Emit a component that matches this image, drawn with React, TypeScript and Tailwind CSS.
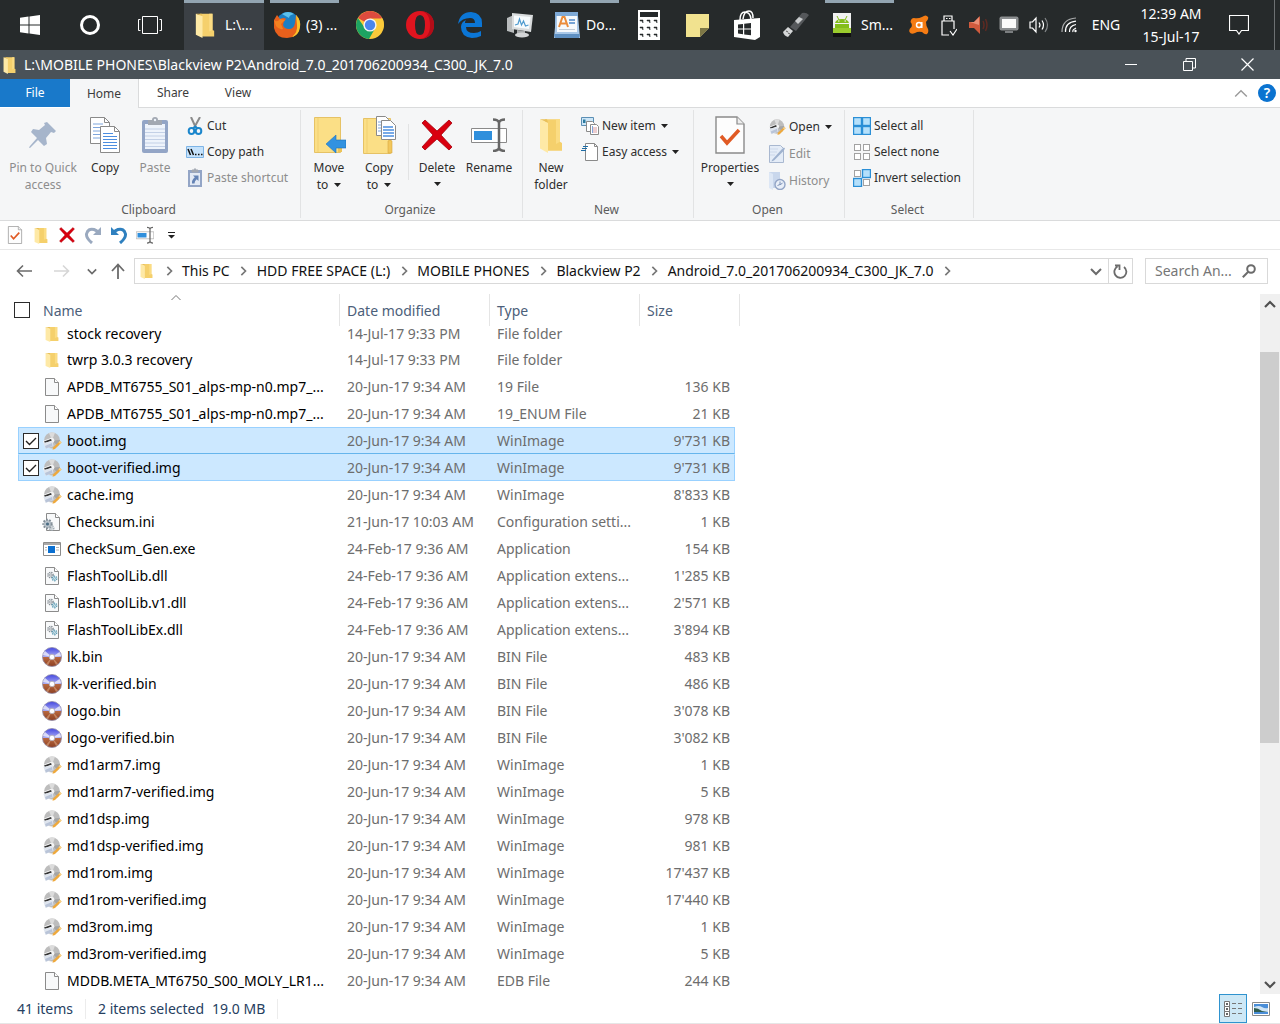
import type React from "react"
import { clsx } from "clsx"

type FileKind = "folder" | "blank" | "image" | "ini" | "exe" | "dll" | "bin"

interface FileRow {
  name: string
  kind: FileKind
  date: string
  type: string
  size?: string
  selected?: boolean
}

const JUN = "20-Jun-17 9:34 AM"
const FEB = "24-Feb-17 9:36 AM"

const files: FileRow[] = [
  { name: "stock recovery", kind: "folder", date: "14-Jul-17 9:33 PM", type: "File folder" },
  { name: "twrp 3.0.3 recovery", kind: "folder", date: "14-Jul-17 9:33 PM", type: "File folder" },
  { name: "APDB_MT6755_S01_alps-mp-n0.mp7_...", kind: "blank", date: JUN, type: "19 File", size: "136 KB" },
  { name: "APDB_MT6755_S01_alps-mp-n0.mp7_...", kind: "blank", date: JUN, type: "19_ENUM File", size: "21 KB" },
  { name: "boot.img", kind: "image", date: JUN, type: "WinImage", size: "9'731 KB", selected: true },
  { name: "boot-verified.img", kind: "image", date: JUN, type: "WinImage", size: "9'731 KB", selected: true },
  { name: "cache.img", kind: "image", date: JUN, type: "WinImage", size: "8'833 KB" },
  { name: "Checksum.ini", kind: "ini", date: "21-Jun-17 10:03 AM", type: "Configuration setti...", size: "1 KB" },
  { name: "CheckSum_Gen.exe", kind: "exe", date: FEB, type: "Application", size: "154 KB" },
  { name: "FlashToolLib.dll", kind: "dll", date: FEB, type: "Application extens...", size: "1'285 KB" },
  { name: "FlashToolLib.v1.dll", kind: "dll", date: FEB, type: "Application extens...", size: "2'571 KB" },
  { name: "FlashToolLibEx.dll", kind: "dll", date: FEB, type: "Application extens...", size: "3'894 KB" },
  { name: "lk.bin", kind: "bin", date: JUN, type: "BIN File", size: "483 KB" },
  { name: "lk-verified.bin", kind: "bin", date: JUN, type: "BIN File", size: "486 KB" },
  { name: "logo.bin", kind: "bin", date: JUN, type: "BIN File", size: "3'078 KB" },
  { name: "logo-verified.bin", kind: "bin", date: JUN, type: "BIN File", size: "3'082 KB" },
  { name: "md1arm7.img", kind: "image", date: JUN, type: "WinImage", size: "1 KB" },
  { name: "md1arm7-verified.img", kind: "image", date: JUN, type: "WinImage", size: "5 KB" },
  { name: "md1dsp.img", kind: "image", date: JUN, type: "WinImage", size: "978 KB" },
  { name: "md1dsp-verified.img", kind: "image", date: JUN, type: "WinImage", size: "981 KB" },
  { name: "md1rom.img", kind: "image", date: JUN, type: "WinImage", size: "17'437 KB" },
  { name: "md1rom-verified.img", kind: "image", date: JUN, type: "WinImage", size: "17'440 KB" },
  { name: "md3rom.img", kind: "image", date: JUN, type: "WinImage", size: "1 KB" },
  { name: "md3rom-verified.img", kind: "image", date: JUN, type: "WinImage", size: "5 KB" },
  { name: "MDDB.META_MT6750_S00_MOLY_LR1...", kind: "blank", date: JUN, type: "EDB File", size: "244 KB" },
]

const crumbs = ["This PC", "HDD FREE SPACE (L:)", "MOBILE PHONES", "Blackview P2", "Android_7.0_201706200934_C300_JK_7.0"]

/* ---------- shared icons ---------- */

const FolderIcon = ({ className }: { className: string }) => (
  <svg viewBox="0 0 24 32" preserveAspectRatio="none" className={className}>
    <path d="M6 2h15v20l2 1v7H6z" fill="#f5d06c" />
    <path d="M17 2h4v20l-4 2z" fill="#fbdc83" />
    <path d="M1 2l8 3v27l-8-4z" fill="#fee9a6" />
    <path d="M1 2h7l1 3z" fill="#e9c05a" />
  </svg>
)

const PageIcon = ({ className, children }: { className: string; children?: React.ReactNode }) => (
  <svg viewBox="0 0 18 20" className={className}>
    <path d="M2.5 1.5h9l4 4v13h-13z" fill="#f8f9fa" stroke="#8b8b8b" />
    <path d="M11.5 1.5v4h4" fill="#fff" stroke="#8b8b8b" />
    {children}
  </svg>
)

const DiscImageIcon = () => (
  <svg viewBox="0 0 20 20" className="size-5">
    <circle cx="10" cy="9.500" r="8" fill="#bdbdbd" />
    <path d="M10 9.500L7 2a8 8 0 0 1 6-.2z" fill="#dcdcdc" />
    <path d="M10 9.500L18 9a8 8 0 0 1-2 6z" fill="#a5a5a5" />
    <circle cx="10" cy="9.500" r="2.400" fill="#f4f4f4" />
    <path d="M1 10l8-3 2 3-9 3z" fill="#fafafa" />
    <path d="M2 10.500l7-2.600.8 1.600L3 12z" fill="#333" />
    <path d="M1.500 12l9-2 1 5-8 3z" fill="#dfe5ee" />
    <path d="M3 15l7-3 .6 3L4 17.500z" fill="#b9c4d8" />
    <path d="M11 16.500l7-6.500 1.500 1.500-6.500 6.500-2.500.8z" fill="#efa93c" />
    <path d="M16.500 11.300L18 9.800l1.700 1.600-1.500 1.500z" fill="#f6cf88" />
  </svg>
)

const Gear = ({ cx, cy, r, color }: { cx: number; cy: number; r: number; color: string }) => (
  <g fill="none" stroke={color}>
    <circle cx={cx} cy={cy} r={r} strokeWidth="1.500" strokeDasharray="1.300 0.800" />
    <circle cx={cx} cy={cy} r={r / 2.5} strokeWidth="0.800" />
  </g>
)

const FileIcon = ({ kind }: { kind: FileKind }) => {
  switch (kind) {
    case "folder":
      return <FolderIcon className="h-4 w-3.5" />
    case "blank":
      return <PageIcon className="h-5 w-[18px]" />
    case "image":
      return <DiscImageIcon />
    case "ini":
      return (
        <svg viewBox="0 0 20 20" className="size-5">
          <path d="M4.500 1.500h9l4 4v13h-13z" fill="#f8f9fa" stroke="#8b8b8b" />
          <path d="M13.500 1.500v4h4" fill="#fff" stroke="#8b8b8b" />
          <circle cx="5.500" cy="12" r="4" fill="#b9c3cb" />
          <circle cx="5.500" cy="12" r="4.200" fill="none" stroke="#7f8b94" strokeWidth="2" strokeDasharray="1.600 1.400" />
          <circle cx="5.500" cy="12" r="1.600" fill="#4e6f86" />
          <Gear cx={9.5} cy={16} r={2.3} color="#a3adb5" />
        </svg>
      )
    case "exe":
      return (
        <svg viewBox="0 0 20 20" className="size-5">
          <path d="M1.500 3.500h17v13h-17z" fill="#fff" stroke="#8b8b8b" />
          <path d="M2 4h16v2H2z" fill="#a9a9a9" />
          <path d="M6 7h7v7H6z" fill="#0a6fd1" />
          <path d="M3 8.500h2M3 11h2M14 8.500h3M14 11h3" stroke="#b5b5b5" />
        </svg>
      )
    case "dll":
      return (
        <PageIcon className="h-5 w-[18px]">
          <Gear cx={7.5} cy={9} r={2.6} color="#878f96" />
          <Gear cx={11.5} cy={12.5} r={2.2} color="#5d9db5" />
        </PageIcon>
      )
    case "bin":
      return (
        <svg viewBox="0 0 20 20" className="size-5">
          <defs>
            <linearGradient id="cd" x1="0" y1="0" x2="0" y2="1">
              <stop offset="0" stopColor="#4347e0" />
              <stop offset="0.480" stopColor="#a9abf2" />
              <stop offset="0.520" stopColor="#b8683f" />
              <stop offset="1" stopColor="#8c3f22" />
            </linearGradient>
          </defs>
          <circle cx="10" cy="10" r="9.500" fill="url(#cd)" stroke="#8f8ba8" strokeWidth="0.800" />
          <path d="M10 10L1 8a9 9 0 0 1 2-4zM10 10l7.500-5a9 9 0 0 1 1.500 4z" fill="#eceefa" opacity="0.800" />
          <path d="M10 10L6 18.500a9 9 0 0 1-2-1.500zM10 10l4 8a9 9 0 0 0 2-1.500z" fill="#e6b592" opacity="0.500" />
          <circle cx="10" cy="10" r="2.800" fill="#fff" stroke="#a9a3b0" strokeWidth="0.800" />
        </svg>
      )
  }
}

const Caret = () => (
  <svg viewBox="0 0 7 4" className="h-1 w-[7px]">
    <path d="M0 0h7L3.500 4z" fill="#222" />
  </svg>
)

const Chevron = ({ className, d, width = 2 }: { className: string; d: string; width?: number }) => (
  <svg viewBox="0 0 12 12" className={className} fill="none" stroke="currentColor" strokeWidth={width}>
    <path d={d} />
  </svg>
)

const RenameIcon = ({ className }: { className: string }) => (
  <svg viewBox="0 0 36 34" className={className}>
    <path d="M.5 10.500h35v14H.5z" fill="#fff" stroke="#8a8a8a" />
    <path d="M3 13h18v9H3z" fill="#2f8fdc" />
    <path d="M22 1.500q5 0 6 3 1-3 6-3M28 4v26M22 33q5 0 6-3 1 3 6 3" fill="none" stroke="#666" strokeWidth="2.500" />
  </svg>
)

const CrossIcon = ({ className }: { className: string }) => (
  <svg viewBox="0 0 32 32" className={className}>
    <path d="M1 4l3-3 12 11L28 1l3 3-11 12 11 12-3 3-12-11L4 31l-3-3 11-12z" fill="#d9000f" stroke="#a5000b" strokeWidth="0.800" />
  </svg>
)

const PropertiesIcon = ({ className }: { className: string }) => (
  <svg viewBox="0 0 30 38" className={className}>
    <path d="M1 1h21l7 7v29H1z" fill="#fdfdfd" stroke="#8a8a8a" strokeWidth="1.400" />
    <path d="M22 1v7h7" fill="#eee" stroke="#8a8a8a" strokeWidth="1.200" />
    <path d="M6 20l6 7 12-13" fill="none" stroke="#e05a24" strokeWidth="3.500" />
  </svg>
)

/* ---------- ribbon icons ---------- */

const PinIcon = () => (
  <svg viewBox="0 0 28 28" className="size-7">
    <path d="M18 1l9 9-2 2-3-1-5 6 1 6-3 2-6-6-8 8-1-.5L1 25l7-8-6-6 2-3 6 1 6-5-1-2z" fill="#a6b5cb" />
  </svg>
)

const CopyIcon = () => (
  <svg viewBox="0 0 32 38" className="h-[38px] w-8">
    <path d="M1.500 1.500h14l5 5v21h-19z" fill="#fff" stroke="#8a8a8a" />
    <path d="M15.500 1.500v5h5" fill="none" stroke="#8a8a8a" />
    <path d="M4 8h10M4 11.500h8M4 15h8M4 18.500h8M4 22h8" stroke="#7fa6dd" />
    <path d="M11.500 10.500h14l5 5v21h-19z" fill="#fff" stroke="#8a8a8a" />
    <path d="M25.500 10.500v5h5" fill="none" stroke="#8a8a8a" />
    <path d="M14 17.500h10M14 20.500h14M14 23.500h14M14 26.500h14M14 29.500h14M14 32.500h14" stroke="#4c8ee0" />
  </svg>
)

const PasteIcon = () => (
  <svg viewBox="0 0 28 38" className="h-[38px] w-7">
    <rect x="1" y="4" width="26" height="33" rx="2" fill="#93a5c6" />
    <path d="M4 8h20v25H4z" fill="#eef3fb" />
    <path d="M4 13h20M4 16.500h20M4 20h20M4 23.500h20M4 27h20M4 30.500h20" stroke="#c3d0e6" />
    <path d="M7 4h4q0-3 3-3t3 3h4v5H7z" fill="#a2a8b2" />
    <circle cx="14" cy="4" r="1.200" fill="#eef3fb" />
  </svg>
)

const MoveToIcon = () => (
  <svg viewBox="0 0 34 38" className="h-[38px] w-[34px]">
    <path d="M2.500 1.500h26v35h-26z" fill="#fbdf86" stroke="#e6c265" />
    <path d="M6 2v34" stroke="#f1cf70" />
    <path d="M26 24h4v12h-4z" fill="#edc458" />
    <path d="M14 28l10-9v5h10v8H24v5z" fill="#3292e0" stroke="#1d73bd" strokeWidth="0.600" />
  </svg>
)

const CopyToIcon = () => (
  <svg viewBox="0 0 34 40" className="h-10 w-[34px]">
    <path d="M1.500 3.500h27v35h-27z" fill="#fbdf86" stroke="#e6c265" />
    <path d="M5 4v34" stroke="#f1cf70" />
    <path d="M26 26q2-2 4 0v12h-4z" fill="#f2c75c" stroke="#d6a93f" strokeWidth="0.600" />
    <path d="M14.500 1.500h9l3 3v16h-12z" fill="#fff" stroke="#8a8a8a" />
    <path d="M16 7h8M16 10h4M16 13h4M16 16h4" stroke="#7fa6dd" />
    <path d="M19.500 5.500h9l5 5v14h-14z" fill="#fff" stroke="#8a8a8a" />
    <path d="M21 12h10M21 15h11M21 18h11M21 21h11" stroke="#4c8ee0" strokeWidth="1.400" />
  </svg>
)

const CutIcon = () => (
  <svg viewBox="0 0 18 18" className="size-[18px]" fill="none">
    <path d="M5 0l5 11M14 0L8 11" stroke="#8b8b8b" strokeWidth="2" />
    <ellipse cx="5.500" cy="14" rx="2.800" ry="3" stroke="#1b86cc" strokeWidth="2" />
    <ellipse cx="12.500" cy="14" rx="2.800" ry="3" stroke="#1b86cc" strokeWidth="2" />
    <path d="M7 11.500l2.300-2 2.200 2" stroke="#1b86cc" strokeWidth="2" />
  </svg>
)

const CopyPathIcon = () => (
  <svg viewBox="0 0 18 12" className="h-3 w-[18px]">
    <path d="M.5.500h17v11H.5z" fill="#c5e2fb" stroke="#7db4e6" />
    <path d="M2 3l2.500 6M5 3l2.500 6" stroke="#111" strokeWidth="1.500" />
    <path d="M9 8.500h1.500M12 8.500h1.500M15 8.500h1.500" stroke="#111" strokeWidth="1.500" />
  </svg>
)

const PasteShortcutIcon = () => (
  <svg viewBox="0 0 18 20" className="h-5 w-[18px]">
    <rect x="2" y="2" width="14" height="17" fill="#93a5c6" />
    <path d="M4 5h10v12H4z" fill="#e3eaf5" />
    <path d="M6 2h2q1-3 2 0h2v2H6z" fill="#a2a8b2" stroke="#a2a8b2" />
    <path d="M7 7.500h5.500V13l-1.800-1.800Q8.500 13 8.500 15.500H6Q5.500 12 8.800 9.300z" fill="#6483b5" />
  </svg>
)

const NewItemIcon = () => (
  <svg viewBox="0 0 18 18" className="size-[18px]">
    <path d="M.5.500h12v8H.5z" fill="#cde6f7" stroke="#5b8fb5" />
    <path d="M2 6V2.500h2.500V6z" fill="#2b7a9f" />
    <path d="M5.500 4.500h6l2 2v8h-8z" fill="#fff" stroke="#8a8a8a" />
    <path d="M9.500 7.500h6l2 2v8h-8z" fill="#fff" stroke="#8a8a8a" />
    <path d="M11 11h5M11 13h5M11 15h5" stroke="#d99aa0" />
    <path d="M11.500 9v7" stroke="#7fa6dd" />
  </svg>
)

const EasyAccessIcon = () => (
  <svg viewBox="0 0 18 18" className="size-[18px]">
    <path d="M4.500.500h9l3 3v14h-12z" fill="#fff" stroke="#8a8a8a" />
    <path d="M13.500.500v3h3" fill="none" stroke="#8a8a8a" />
    <path d="M2 3.500h5M1 5.500h5M0 7.500h5" stroke="#1f6da5" strokeWidth="1.200" />
  </svg>
)

const EditIcon = () => (
  <svg viewBox="0 0 18 18" className="size-[18px]">
    <path d="M1.500.500h11l3 3v14h-14z" fill="#e4ecf7" stroke="#a9b8d0" />
    <path d="M4 15L14 4l2-1.500 1 1L15.500 6 6 15.500 3.500 16.500z" fill="#9fb2cf" />
    <path d="M2 4h8M2 7h7M2 10h5" stroke="#ccd8ea" />
  </svg>
)

const HistoryIcon = () => (
  <svg viewBox="0 0 18 18" className="size-[18px]">
    <path d="M1 0h11v16H1z" fill="#c9d7ec" />
    <path d="M1 0l4 2v16l-4-2z" fill="#dde7f5" />
    <circle cx="12" cy="12.500" r="5" fill="#e9eff8" stroke="#93a5c6" strokeWidth="1.400" />
    <path d="M12 9.500v3.200l2.500-1.500M9.500 13.500l2.500-1" fill="none" stroke="#7d92b8" />
  </svg>
)

const SelectIcon = ({ cells }: { cells: boolean[] }) => (
  <svg viewBox="0 0 18 18" className="size-[18px]">
    {cells.map((on, i) => {
      const right = i % 2 === 1
      const low = i > 1
      return on ? (
        <rect key={i} x={right ? 9.5 : 0.5} y={low ? 9.5 : 0.5} width="8" height="8" fill="#b5e0fb" stroke="#2b8fd6" strokeWidth="1.400" />
      ) : (
        <rect key={i} x={right ? 10.5 : 1.5} y={low ? 10.5 : 1.5} width="6" height="6" fill="#fff" stroke="#a2a2a2" />
      )
    })}
  </svg>
)

const TurnIcon = ({ color, flip }: { color: string; flip?: boolean }) => (
  <svg viewBox="0 0 18 18" className={clsx("size-[18px]", flip && "-scale-x-100")}>
    <path d="M8 17Q2 12 2.500 8 4 2 10 3.500q3 1 4 3" fill="none" stroke={color} strokeWidth="3" />
    <path d="M17 1v8H9z" fill={color} />
  </svg>
)

/* ---------- taskbar ---------- */

const TaskIcon = ({ label, narrow, children }: { label: string; narrow?: boolean; children: React.ReactNode }) => (
  <button aria-label={label} className={clsx("flex h-full shrink-0 items-center justify-center", narrow ? "w-[49px]" : "w-[50px]")}>
    {children}
  </button>
)

const TaskWindow = ({ text, active, children }: { text: string; active?: boolean; children: React.ReactNode }) => (
  <button
    className={clsx(
      "flex h-full shrink-0 items-center border-t-[3px] border-[#93a5b2] pb-[3px] text-white",
      active ? "w-20 gap-2.5 bg-[#3b4045] pl-[11px]" : "w-[69px] gap-[5px] pl-[3px]",
    )}
  >
    {children}
    <span className="whitespace-nowrap">{text}</span>
  </button>
)

const TrayIcon = ({ label, children }: { label: string; children: React.ReactNode }) => (
  <button aria-label={label} className="flex h-full w-[30px] items-center justify-center">
    {children}
  </button>
)

const Taskbar = () => (
  <div className="flex h-[50px] items-center bg-[#262a2b] text-sm text-white">
    <button aria-label="Start" className="flex h-full w-[60px] items-center justify-center">
      <svg viewBox="0 0 20 20" className="size-5" fill="#fff">
        <path d="M0 2.800L8.500 1.600v8H0zM9.500 1.500L20 0v9.600H9.500zM0 10.500h8.500v8L0 17.300zM9.500 10.500H20V20L9.500 18.600z" />
      </svg>
    </button>
    <button aria-label="Cortana" className="flex h-full w-[60px] items-center justify-center">
      <span className="size-5 rounded-full border-[3px] border-white" />
    </button>
    <button aria-label="Task view" className="mr-1 flex h-full w-[60px] items-center justify-center">
      <svg viewBox="0 0 24 18" className="h-[18px] w-6" fill="none" stroke="#fff">
        <path d="M4.500.500h15v17h-15zM2.500 3.500h-2v11h2M21.500 3.500h2v11h-2" />
      </svg>
    </button>
    <TaskWindow text="L:\..." active>
      <FolderIcon className="h-[26px] w-5" />
    </TaskWindow>
    <div className="mx-1.5 flex h-full">
      <TaskWindow text="(3) ...">
        <svg viewBox="0 0 28 28" className="size-7 shrink-0">
          <circle cx="15" cy="12.500" r="11.500" fill="#1c7fc4" />
          <path d="M9 3q6-4 12 0-5 1-5 4z" fill="#5cc0ec" />
          <path d="M1 9L4 4l3 4q4-2 6 0-3 3-3 6 1 4 6 4 5 0 6-6l1-8q5 5 4 12-2 11-13 11T1 17z" fill="#e8601c" />
          <path d="M23 4q5 5 4 12-1 8-8 10 6-5 5-12z" fill="#fbc42c" />
          <path d="M1 9q3 3 6-1l5 1-4 4 2 5q-4 1-7-3z" fill="#f58220" />
        </svg>
      </TaskWindow>
    </div>
    <TaskIcon label="Chrome">
      <svg viewBox="0 0 28 28" className="size-7">
        <circle cx="14" cy="14" r="14" fill="#fbca3a" />
        <path d="M14 14L2 7a14 14 0 0 1 24.200 0z" fill="#dd4b3e" />
        <path d="M1.900 7A14 14 0 0 0 13 28l6-10.500-9 1z" fill="#1da462" />
        <path d="M14 7.500h12.500q2 5 1 9L19 14z" fill="#fbca3a" />
        <circle cx="14" cy="14" r="6.600" fill="#f4f4f4" />
        <circle cx="14" cy="14" r="5.200" fill="#4a86ee" />
      </svg>
    </TaskIcon>
    <TaskIcon label="Opera">
      <svg viewBox="0 0 28 28" className="size-7">
        <path d="M14 0a14 14 0 1 0 0 28 14 14 0 1 0 0-28zm0 4q5 0 5 10t-5 10-5-10 5-10z" fill="#e0141f" fillRule="evenodd" />
        <path d="M14 0q10 1 10 14T14 28q14-1 14-14T14 0z" fill="#b30d18" />
      </svg>
    </TaskIcon>
    <TaskIcon label="Edge">
      <svg viewBox="0 0 26 26" className="size-[26px]">
        <path d="M1 12Q3 0 14 0q11 1 11 11v4H9q0 6 8 6 4 0 7-2v5q-4 2-9 2Q4 25 4 15q0-5 5-7-1 1-1 3h10q0-5-5-5Q5 6 1 12z" fill="#0b76d6" />
      </svg>
    </TaskIcon>
    <TaskIcon label="Resource monitor">
      <svg viewBox="0 0 28 26" className="h-[26px] w-7">
        <path d="M1 6l7-3v18l-7-2z" fill="#b9bcbd" />
        <path d="M6 1l21 2-2 17-19-3z" fill="#d9dcdd" />
        <path d="M8 3.500l16.500 1.500-1.500 12-15-2z" fill="#f7fbfd" />
        <path d="M9 13l3-1 1.500-5 2 6 2-4 2 5 3-1" fill="none" stroke="#4f9bcf" strokeWidth="1.200" />
        <path d="M11 18l8 1v3H11z" fill="#a9acad" />
        <ellipse cx="16" cy="23" rx="7" ry="2.500" fill="#d3d5d6" />
      </svg>
    </TaskIcon>
    <div className="mx-[5px] flex h-full">
      <TaskWindow text="Do...">
        <svg viewBox="0 0 28 28" className="size-7 shrink-0">
          <path d="M2 1h23v26H2z" fill="#7ea9d6" />
          <path d="M3 5h22l2 22H1z" fill="#a9c8e8" />
          <path d="M4 5h20v16H4z" fill="#f6f9fc" />
          <path d="M6 16L9.500 6h2l3.500 10M8 12.500h5" fill="none" stroke="#ea8b3a" strokeWidth="2" />
          <path d="M16 9h6M16 12h6" stroke="#4c86c8" strokeWidth="1.500" />
          <path d="M6 18.500h16" stroke="#c3ccd6" />
          <path d="M1 23h26l-1 4H2z" fill="#5f90c2" />
        </svg>
      </TaskWindow>
    </div>
    <TaskIcon label="Calculator" narrow>
      <svg viewBox="0 0 22 30" className="h-[30px] w-[22px]">
        <path d="M0 0h22v30H0z" fill="#fff" />
        <path d="M2 2h18v5H2z" fill="#262a2b" />
        {[10, 17, 24].map((y) =>
          [2, 9, 16].map((x) => <path key={`${x}-${y}`} d={`M${x} ${y}h3v3l-1-2h-2z`} fill="#262a2b" stroke="#262a2b" strokeWidth="0.500" />),
        )}
      </svg>
    </TaskIcon>
    <TaskIcon label="Sticky notes" narrow>
      <svg viewBox="0 0 23 23" className="size-[23px]">
        <path d="M0 0h23v14l-9 9H0z" fill="#f1e28f" />
        <path d="M14 23v-9h9z" fill="#7d7746" />
      </svg>
    </TaskIcon>
    <TaskIcon label="Store" narrow>
      <svg viewBox="0 0 26 30" className="h-[30px] w-[26px]">
        <path d="M0 10l26-2v19l-5 3-21-3z" fill="#fff" />
        <path d="M6 10q0-8 5-8t6 7M9 9q1-8 6-8 4 0 4 7" fill="none" stroke="#fff" strokeWidth="1.500" />
        <path d="M4 14.500l5-.6v4.600H4zM10.200 13.800l6.800-.8v5.500h-6.800zM4 19.600h5v4.600l-5-.6zM10.200 19.600H17v5.600l-6.800-.8z" fill="#262a2b" />
      </svg>
    </TaskIcon>
    <TaskIcon label="USB drive" narrow>
      <svg viewBox="0 0 28 26" className="h-[26px] w-7">
        <path d="M8 15L20 1q4-1 7 2L14 19z" fill="#55585b" />
        <path d="M13 9l4-4 4 2-5 5z" fill="#c9cccd" />
        <path d="M1 20l5-5 5 4-5 6q-4-1-5-5z" fill="#d5d7d8" />
        <path d="M4 19l2 1M6 21l2 1" stroke="#5b5b5b" />
      </svg>
    </TaskIcon>
    <div className="ml-[5px] flex h-full">
      <TaskWindow text="Sm...">
        <svg viewBox="0 0 28 28" className="size-7 shrink-0">
          <path d="M5 2h18v20H5z" fill="#f1f1f1" />
          <path d="M5 22h18v4H5z" fill="#111" />
          <path d="M7 12q1-4 7-4t7 4zM7 13h14v7H7z" fill="#84bd1b" />
          <path d="M9 5l2 4M19 5l-2 4" stroke="#84bd1b" />
          <path d="M5 17h18v5H5z" fill="#9acb2d" />
          <path d="M10 10h1.500M16.500 10H18" stroke="#fff" />
        </svg>
      </TaskWindow>
    </div>
    <div className="ml-auto flex h-full items-center">
      <TrayIcon label="Avast">
        <svg viewBox="0 0 20 20" className="size-5">
          <path d="M5 3q4 1 8-1 4-3 6 0 1 2-2 5 0 4 2 7 1 3-1 5-2 1-5-2-4-1-7 1-4 2-5.500-1-1-3 2-5 1-3-1-5Q2 3 5 3z" fill="#f57c14" />
          <circle cx="10" cy="10" r="2.500" fill="none" stroke="#fff" strokeWidth="1.500" />
          <path d="M12.800 7v6" stroke="#fff" strokeWidth="1.500" />
        </svg>
      </TrayIcon>
      <TrayIcon label="Safely remove hardware">
        <svg viewBox="0 0 16 21" className="h-[21px] w-4" fill="none" stroke="#fff" strokeWidth="1.200">
          <path d="M3 6V1h8v5M8 20H1V6h12v8M9 16l3 4 4-6M5 3.500h1.500M8 3.500h1.500" />
        </svg>
      </TrayIcon>
      <TrayIcon label="Audio manager">
        <svg viewBox="0 0 20 20" className="size-5">
          <path d="M0 7h5l6-6v18l-6-6H0z" fill="#cf5a3d" />
          <path d="M1 7h4l5-5v8z" fill="#e98f76" />
          <path d="M14 6q2 4 0 8M16.500 4q3 6 0 12" fill="none" stroke="#5e2a22" strokeWidth="1.500" />
        </svg>
      </TrayIcon>
      <TrayIcon label="Display">
        <svg viewBox="0 0 20 18" className="h-[18px] w-5">
          <rect x="0.500" y="0.500" width="19" height="14" rx="2" fill="#8b8e90" />
          <path d="M3 3h14v9H3z" fill="#fbfbfb" />
          <path d="M6 15h8v2H6z" fill="#7b7e80" />
        </svg>
      </TrayIcon>
      <TrayIcon label="Volume">
        <svg viewBox="0 0 20 18" className="h-[18px] w-5" fill="none" stroke="#fff" strokeWidth="1.200">
          <path d="M1 6h2.500L7 2v14l-3.500-4H1zM10 6.500q2 2.500 0 5M13 4.500q3 4.500 0 9" />
          <path d="M16 2q5 7 0 14" stroke="#85888a" />
        </svg>
      </TrayIcon>
      <TrayIcon label="Network">
        <svg viewBox="0 0 16 16" className="size-4" fill="none" stroke="#fff" strokeWidth="1.200">
          <path d="M12 15q-1-2 3-4M8.500 15Q8 9 15 7.500M4.500 15Q4 5.500 15 4.200" />
          <path d="M1 15Q1 2 15 1" stroke="#a9abac" />
          <circle cx="14.500" cy="14" r="1.200" fill="#fff" stroke="none" />
        </svg>
      </TrayIcon>
      <button className="w-11 text-center">ENG</button>
      <button className="w-[86px] text-center leading-[23px]">
        12:39 AM
        <br />
        15-Jul-17
      </button>
      <button aria-label="Notifications" className="flex h-full w-[50px] items-center justify-center">
        <svg viewBox="0 0 20 20" className="size-5" fill="none" stroke="#fff" strokeWidth="1.200">
          <path d="M.5.500h19v15h-7L10 19l-2.500-3.500h-7z" />
        </svg>
      </button>
      <div className="ml-2.5 mr-[5px] h-full w-px bg-[#6d7173]" />
    </div>
  </div>
)

/* ---------- window ---------- */

const TitleBar = () => (
  <div className="flex h-[29px] items-center bg-[#4a5258] text-white">
    <FolderIcon className="ml-[3px] mr-2 h-[18px] w-[13px]" />
    <h1 className="text-sm">L:\MOBILE PHONES\Blackview P2\Android_7.0_201706200934_C300_JK_7.0</h1>
    <div className="ml-auto mr-1 flex h-full">
      <button aria-label="Minimize" className="flex w-[58px] items-center justify-center">
        <span className="h-px w-3 bg-white" />
      </button>
      <button aria-label="Restore" className="flex w-[58px] items-center justify-center">
        <svg viewBox="0 0 13 13" className="size-[13px]" fill="none" stroke="#fff">
          <path d="M.5 3.500h9v9h-9zM3 3V.500h9.500V10H10" />
        </svg>
      </button>
      <button aria-label="Close" className="flex w-[58px] items-center justify-center">
        <svg viewBox="0 0 13 13" className="size-[13px]" stroke="#fff" strokeWidth="1.200">
          <path d="M.5.500l12 12M12.500.500l-12 12" />
        </svg>
      </button>
    </div>
  </div>
)

const TabBar = () => (
  <div className="flex h-[29px] items-stretch bg-white text-xs text-[#3c3c3c]">
    <button className="mb-px w-[70px] bg-[#1979ca] text-white">File</button>
    <button className="w-[69px] border-r border-[#dadbdc] bg-[#f5f6f7]">Home</button>
    <div className="flex flex-1 items-center border-b border-[#dadbdc]">
      <button className="w-[68px]">Share</button>
      <button className="w-[62px]">View</button>
      <button aria-label="Minimize the ribbon" className="ml-auto mr-2.5 text-[#9a9a9a]">
        <Chevron className="size-3.5" d="M1 9l5-5 5 5" width={1.2} />
      </button>
      <button aria-label="Help" className="mr-1 flex size-[18px] items-center justify-center rounded-full bg-[#0b73d0] text-sm font-semibold leading-none text-white">
        ?
      </button>
    </div>
  </div>
)

interface BigButtonProps {
  icon: React.ReactNode
  lines: string[]
  width: string
  arrow?: boolean
  disabled?: boolean
}

const BigButton = ({ icon, lines, width, arrow, disabled }: BigButtonProps) => (
  <button disabled={disabled} className={clsx("flex shrink-0 flex-col items-center leading-[17px]", width, disabled && "text-[#8d8d8d]")}>
    <span className="my-1 flex h-[41px] items-center justify-center">{icon}</span>
    {lines.map((line, i) => (
      <span key={line} className="flex items-center gap-1.5 whitespace-nowrap">
        {line}
        {arrow && i === 1 && <Caret />}
      </span>
    ))}
    {arrow && lines.length === 1 && (
      <span className="flex h-[15px] items-center">
        <Caret />
      </span>
    )}
  </button>
)

interface SmallButtonProps {
  icon: React.ReactNode
  text: string
  arrow?: boolean
  disabled?: boolean
}

const SmallButton = ({ icon, text, arrow, disabled }: SmallButtonProps) => (
  <button disabled={disabled} className={clsx("flex h-[26px] items-center gap-[3px] whitespace-nowrap", disabled && "text-[#8d8d8d]")}>
    <span className="flex w-[18px] justify-center">{icon}</span>
    {text}
    {arrow && (
      <span className="ml-0.5">
        <Caret />
      </span>
    )}
  </button>
)

const RibbonGroup = ({ label, width, children }: { label: string; width: string; children: React.ReactNode }) => (
  <section aria-label={label} className={clsx("my-0.5 flex shrink-0 flex-col border-r border-[#e2e3e4]", width)}>
    <div className="flex flex-1">{children}</div>
    <div className="pr-[3px] text-center leading-4 text-[#5c5c5c]">{label}</div>
  </section>
)

const Ribbon = () => (
  <div className="flex h-[113px] border-b border-[#dadbdc] bg-[#f5f6f7] text-xs text-[#2e2e2e]">
    <RibbonGroup label="Clipboard" width="w-[301px]">
      <BigButton icon={<PinIcon />} lines={["Pin to Quick", "access"]} width="ml-2 w-[70px]" disabled />
      <BigButton icon={<CopyIcon />} lines={["Copy"]} width="w-[54px]" />
      <BigButton icon={<PasteIcon />} lines={["Paste"]} width="w-[46px]" disabled />
      <div className="ml-2 flex flex-col pt-[3px]">
        <SmallButton icon={<CutIcon />} text="Cut" />
        <SmallButton icon={<CopyPathIcon />} text="Copy path" />
        <SmallButton icon={<PasteShortcutIcon />} text="Paste shortcut" disabled />
      </div>
    </RibbonGroup>
    <RibbonGroup label="Organize" width="w-[222px]">
      <BigButton icon={<MoveToIcon />} lines={["Move", "to"]} width="ml-[3px] w-[50px]" arrow />
      <BigButton icon={<CopyToIcon />} lines={["Copy", "to"]} width="w-[50px]" arrow />
      <div className="ml-1 mt-3.5 h-14 w-px bg-[#e2e3e4]" />
      <BigButton icon={<CrossIcon className="size-8" />} lines={["Delete"]} width="ml-0.5 w-[52px]" arrow />
      <BigButton icon={<RenameIcon className="h-[34px] w-9" />} lines={["Rename"]} width="w-[52px]" />
    </RibbonGroup>
    <RibbonGroup label="New" width="w-[171px]">
      <BigButton icon={<FolderIcon className="h-9 w-6" />} lines={["New", "folder"]} width="ml-[3px] w-[50px]" />
      <div className="ml-[5px] flex flex-col pt-[3px]">
        <SmallButton icon={<NewItemIcon />} text="New item" arrow />
        <SmallButton icon={<EasyAccessIcon />} text="Easy access" arrow />
      </div>
    </RibbonGroup>
    <RibbonGroup label="Open" width="w-[151px]">
      <BigButton icon={<PropertiesIcon className="h-[38px] w-[30px]" />} lines={["Properties"]} width="ml-[3px] w-[66px]" arrow />
      <div className="ml-[5px] flex flex-col gap-px pt-1">
        <SmallButton icon={<DiscImageIcon />} text="Open" arrow />
        <SmallButton icon={<EditIcon />} text="Edit" disabled />
        <SmallButton icon={<HistoryIcon />} text="History" disabled />
      </div>
    </RibbonGroup>
    <RibbonGroup label="Select" width="w-[129px]">
      <div className="ml-2 flex flex-col pt-[3px]">
        <SmallButton icon={<SelectIcon cells={[true, true, true, true]} />} text="Select all" />
        <SmallButton icon={<SelectIcon cells={[false, false, false, false]} />} text="Select none" />
        <SmallButton icon={<SelectIcon cells={[false, true, true, false]} />} text="Invert selection" />
      </div>
    </RibbonGroup>
  </div>
)

const QuickAccess = () => (
  <div className="flex h-[29px] items-center border-b border-[#e8e8e8] px-1.5">
    <button aria-label="Properties" className="flex w-[18px] justify-center">
      <PropertiesIcon className="h-[18px] w-4" />
    </button>
    <button aria-label="New folder" className="ml-2 flex w-[18px] justify-center">
      <FolderIcon className="h-[17px] w-3.5" />
    </button>
    <button aria-label="Delete" className="ml-2 flex w-[18px] justify-center">
      <CrossIcon className="size-4" />
    </button>
    <button aria-label="Redo" className="ml-2">
      <TurnIcon color="#9aa9bf" />
    </button>
    <button aria-label="Undo" className="ml-2">
      <TurnIcon color="#2f80bf" flip />
    </button>
    <button aria-label="Rename" className="ml-2">
      <RenameIcon className="size-[18px]" />
    </button>
    <button aria-label="Customize Quick Access Toolbar" className="ml-3.5">
      <svg viewBox="0 0 7 7" className="size-[7px]">
        <path d="M0 0h7v1H0zM0 3h7L3.500 6.500z" fill="#222" />
      </svg>
    </button>
  </div>
)

const AddressBar = () => (
  <div className="flex h-11 items-center pb-0.5 text-sm">
    <button aria-label="Back" className="ml-4 text-[#6b6b6b]">
      <svg viewBox="0 0 16 14" className="h-3.5 w-4" fill="none" stroke="currentColor" strokeWidth="1.600">
        <path d="M16 7H1.500M7 1.500L1.500 7 7 12.500" />
      </svg>
    </button>
    <button aria-label="Forward" className="ml-[22px] text-[#d6d6d6]">
      <svg viewBox="0 0 16 14" className="h-3.5 w-4" fill="none" stroke="currentColor" strokeWidth="1.600">
        <path d="M0 7h14.500M9 1.500L14.500 7 9 12.500" />
      </svg>
    </button>
    <button aria-label="Recent locations" className="ml-[17px] text-[#6b6b6b]">
      <Chevron className="size-2.5" d="M1 4l5 5 5-5" />
    </button>
    <button aria-label="Up" className="ml-3.5 text-[#6b6b6b]">
      <svg viewBox="0 0 14 16" className="h-4 w-3.5" fill="none" stroke="currentColor" strokeWidth="1.800">
        <path d="M7 16V1.500M1 8l6-6.500L13 8" />
      </svg>
    </button>
    <nav aria-label="Address" className="ml-[9px] flex h-[26px] flex-1 items-center border border-[#d9d9d9] pl-[5px] text-[#111]">
      <FolderIcon className="mr-0.5 h-4 w-[13px]" />
      {crumbs.map((crumb) => (
        <span key={crumb} className="flex items-center whitespace-nowrap">
          <span className="flex w-[27px] justify-center text-[#777]">
            <Chevron className="size-2.5" d="M4 1l5 5-5 5" />
          </span>
          <a href="#">{crumb}</a>
        </span>
      ))}
      <span className="flex w-[27px] justify-center text-[#777]">
        <Chevron className="size-2.5" d="M4 1l5 5-5 5" />
      </span>
      <button aria-label="Previous locations" className="ml-auto mr-1.5 text-[#6b6b6b]">
        <Chevron className="size-3" d="M1 4l5 5 5-5" />
      </button>
      <button aria-label="Refresh" className="flex h-full w-6 items-center justify-center border-l border-[#d9d9d9] text-[#6b6b6b]">
        <svg viewBox="0 0 15 15" className="size-[15px]" fill="none" stroke="currentColor" strokeWidth="1.800">
          <path d="M11 3a6 6 0 1 1-6.500-.5M2 1.500h4.500V6" />
        </svg>
      </button>
    </nav>
    <div className="ml-3 mr-3 flex h-[26px] w-[123px] items-center border border-[#d9d9d9] pl-[9px] pr-[11px]">
      <input
        type="text"
        aria-label="Search"
        placeholder="Search An..."
        className="w-full min-w-0 bg-transparent outline-none placeholder:text-[#767676]"
      />
      <svg viewBox="0 0 14 14" className="size-3.5 shrink-0 text-[#6b6b6b]" fill="none" stroke="currentColor" strokeWidth="2">
        <circle cx="9" cy="5" r="3.800" />
        <path d="M6 8L.8 13.200" />
      </svg>
    </div>
  </div>
)

const Checkbox = ({ label, checked }: { label: string; checked?: boolean }) => (
  <span className="grid size-4">
    <input
      type="checkbox"
      aria-label={label}
      defaultChecked={checked}
      className="peer col-start-1 row-start-1 size-4 appearance-none border border-[#2b2b2b] bg-white"
    />
    <svg
      viewBox="0 0 16 16"
      className="pointer-events-none invisible col-start-1 row-start-1 size-4 peer-checked:visible"
      fill="none"
      stroke="#222"
      strokeWidth="1.400"
    >
      <path d="M3 8l3.500 3.500L13 5" />
    </svg>
  </span>
)

const FileTable = () => (
  <table className="w-[740px] table-fixed border-separate border-spacing-0 self-start text-sm">
    <colgroup>
      <col className="w-[18px]" />
      <col className="w-[22px]" />
      <col className="w-[300px]" />
      <col className="w-[150px]" />
      <col className="w-[150px]" />
      <col className="w-[95px]" />
      <col className="w-[5px]" />
    </colgroup>
    <thead>
      <tr className="h-8 text-left align-top leading-5 text-[#4c607a]">
        <th colSpan={2} className="p-0 pl-3.5 pt-2">
          <Checkbox label="Select all items" />
        </th>
        <th className="border-r border-[#e5e5e5] p-0 pl-[3px] font-normal">
          <svg viewBox="0 0 10 6" className="ml-32 h-[7px] w-2.5" fill="none" stroke="#777">
            <path d="M.5 5.500L5 1l4.500 4.500" />
          </svg>
          Name
        </th>
        <th className="border-r border-[#e5e5e5] p-0 pl-[7px] pt-[7px] font-normal">Date modified</th>
        <th className="border-r border-[#e5e5e5] p-0 pl-[7px] pt-[7px] font-normal">Type</th>
        <th className="p-0 pl-[7px] pt-[7px] font-normal">Size</th>
        <th className="border-r border-[#e5e5e5] p-0" />
      </tr>
    </thead>
    <tbody>
      {files.map((file, index) => {
        // the list is scrolled a few pixels, so the first row is partly under the header
        const first = index === 0
        const cell = clsx(
          "whitespace-nowrap border-y p-0",
          first && "border-b-[5px]",
          !file.selected && "border-transparent",
          file.selected && "border-[#99d1ff] bg-[#cce8ff]",
          // neighbouring selected rows share one darker line
          file.selected && files[index + 1]?.selected && "border-b-[#66b5ec]",
          file.selected && files[index - 1]?.selected && "border-t-[#cce8ff]",
        )
        return (
          <tr key={index} className={clsx("text-[#6d6d6d]", first ? "leading-[14px]" : "leading-[25px]")}>
            <td className="p-0" />
            <td className={clsx(cell, "border-l pl-1")}>
              {file.selected && <Checkbox label={`Select ${file.name}`} checked />}
            </td>
            <td className={clsx(cell, "pl-0.5")}>
              <div className={clsx("flex items-center text-black", first ? "h-3.5" : "h-[25px]")}>
                <span className="mr-[5px] flex w-5 shrink-0 justify-center">
                  <FileIcon kind={file.kind} />
                </span>
                {file.name}
              </div>
            </td>
            <td className={clsx(cell, "pl-[7px]")}>{file.date}</td>
            <td className={clsx(cell, "pl-[7px]")}>{file.type}</td>
            <td className={clsx(cell, "border-r pr-1 text-right")}>{file.size}</td>
            <td className="p-0" />
          </tr>
        )
      })}
    </tbody>
  </table>
)

const Scrollbar = () => (
  <div className="ml-auto flex w-5 flex-col bg-[#f0f0f0] text-[#505050]">
    <button aria-label="Scroll up" className="flex h-5 items-center justify-center">
      <Chevron className="size-3" d="M1 9l5-5 5 5" width={2.2} />
    </button>
    <div className="flex-[38]" />
    <div className="mr-px flex-[391] bg-[#cdcdcd]" />
    <div className="flex-[231]" />
    <button aria-label="Scroll down" className="flex h-5 items-center justify-center">
      <Chevron className="size-3" d="M1 4l5 5 5-5" width={2.2} />
    </button>
  </div>
)

const StatusBar = () => (
  <div className="flex h-[30px] items-center border-b border-[#e6e6e6] text-sm text-[#26405f]">
    <span className="ml-[17px]">41 items</span>
    <span className="ml-3 h-5 w-px bg-[#ececec]" />
    <span className="ml-3">2 items selected</span>
    <span className="ml-2">19.0 MB</span>
    <span className="ml-3 h-5 w-px bg-[#ececec]" />
    <button aria-label="Details view" className="ml-auto flex h-[29px] w-7 items-center justify-center border border-[#2f93cf] bg-[#cde8f6]">
      <svg viewBox="0 0 18 16" className="h-4 w-[18px]" fill="none" stroke="#777">
        <path d="M.5.500h5v5h-5zM.5 5.500h5v5h-5zM.5 10.500h5v5h-5z" fill="#fff" />
        <path d="M8 2.500h4M14 2.500h4M8 7.500h4M14 7.500h4M8 12.500h4M14 12.500h4" />
        <path d="M2 3h2M2 8h2M2 13h2" stroke="#333" strokeWidth="1.500" />
      </svg>
    </button>
    <button aria-label="Large icons view" className="ml-[5px] mr-2.5">
      <svg viewBox="0 0 18 14" className="h-3.5 w-[18px]">
        <path d="M.5.500h17v13H.5z" fill="#fff" stroke="#8a8a8a" />
        <path d="M2 2h14v10H2z" fill="#4a8ed8" />
        <path d="M2 5q5-2 8 0t6 1v4H2z" fill="#cfe4f5" />
        <path d="M2 6q4 0 8 3l6 1H2z" fill="#2f5d50" />
      </svg>
    </button>
  </div>
)

const App: React.FC = () => {
  return (
    <div className="flex min-h-screen w-full flex-col bg-white font-['Noto_Sans','Open_Sans',sans-serif]">
      <Taskbar />
      <TitleBar />
      <TabBar />
      <Ribbon />
      <QuickAccess />
      <AddressBar />
      <main className="flex flex-1">
        <FileTable />
        <Scrollbar />
      </main>
      <StatusBar />
    </div>
  )
}

export default App
